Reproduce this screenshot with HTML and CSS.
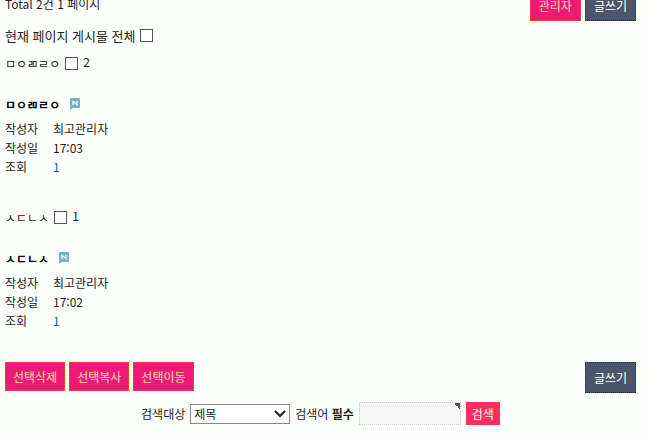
FILE: index.html
```
<!DOCTYPE html>
<html lang="ko">

<head>
    <meta charset="UTF-8">
    <meta name="viewport" content="width=device-width, initial-scale=1.0">
    <title>게시판</title>
    <link rel="stylesheet" href="styles.css">
</head>

<body>
    <div class="board">
        <div class="board-top">
            <div class="total">Total 2건 1 페이지</div>
            <div class="buttons">
                <a class="btn btn-admin" href="#">관리자</a>
                <a class="btn btn-write" href="#">글쓰기</a>
            </div>
        </div>

        <form>
            <div class="check-all">
                <label for="chkall">현재 페이지 게시물 전체</label>
                <input type="checkbox" id="chkall" class="check">
            </div>

            <ul class="list">
                <li class="item">
                    <div class="item-check">
                        <label for="chk_0">ㅁㅇㄻㄹㅇ</label>
                        <input type="checkbox" id="chk_0" class="check">
                        <span class="num">2</span>
                    </div>
                    <a class="item-title" href="#">ㅁㅇㄻㄹㅇ
                        <svg class="icon-new" viewBox="0 0 10 12" aria-hidden="true">
                            <path fill="#70b5bf" d="M1 0h8q1 0 1 1v8q0 1-1 1H3l-3 2V1q0-1 1-1z" />
                            <path fill="none" stroke="#fff" stroke-width="1.3" d="M3 7V3.3L7 6.7V3" />
                        </svg>
                    </a>
                    <dl class="info">
                        <dt>작성자</dt>
                        <dd>최고관리자</dd>
                        <dt>작성일</dt>
                        <dd>17:03</dd>
                        <dt>조회</dt>
                        <dd class="hit">1</dd>
                    </dl>
                </li>
                <li class="item">
                    <div class="item-check">
                        <label for="chk_1">ㅅㄷㄴㅅ</label>
                        <input type="checkbox" id="chk_1" class="check">
                        <span class="num">1</span>
                    </div>
                    <a class="item-title" href="#">ㅅㄷㄴㅅ
                        <svg class="icon-new" viewBox="0 0 10 12" aria-hidden="true">
                            <path fill="#70b5bf" d="M1 0h8q1 0 1 1v8q0 1-1 1H3l-3 2V1q0-1 1-1z" />
                            <path fill="none" stroke="#fff" stroke-width="1.3" d="M3 7V3.3L7 6.7V3" />
                        </svg>
                    </a>
                    <dl class="info">
                        <dt>작성자</dt>
                        <dd>최고관리자</dd>
                        <dt>작성일</dt>
                        <dd>17:02</dd>
                        <dt>조회</dt>
                        <dd class="hit">1</dd>
                    </dl>
                </li>
            </ul>

            <div class="board-bottom">
                <div class="buttons">
                    <button type="button" class="btn btn-admin">선택삭제</button>
                    <button type="button" class="btn btn-admin">선택복사</button>
                    <button type="button" class="btn btn-admin">선택이동</button>
                </div>
                <a class="btn btn-write" href="#">글쓰기</a>
            </div>
        </form>

        <form class="search">
            <label for="sfl">검색대상</label>
            <select id="sfl" class="search-target">
                <option>제목</option>
                <option>내용</option>
            </select>
            <label for="stx">검색어 <strong>필수</strong></label>
            <input type="text" id="stx" class="search-word">
            <button type="button" class="search-btn">검색</button>
        </form>
    </div>
</body>

</html>
```

FILE: styles.css
```
* {
    box-sizing: border-box;
}

body {
    margin: 0;
    background: #fcfffc;
    color: #222;
    font-family: "Noto Sans CJK KR", sans-serif;
    font-size: 12px;
    line-height: 19px;
    overflow: hidden;
}

/* the top of the list is scrolled out of view */
.board {
    margin-top: -10px;
    padding: 0 14px 0 5px;
}

a {
    color: #000;
    text-decoration: none;
}

.board-top,
.board-bottom {
    display: flex;
    justify-content: space-between;
    align-items: flex-start;
}

.total {
    padding-top: 4px;
}

.buttons {
    display: flex;
    gap: 4px;
}

.btn {
    padding: 4px 7px;
    border: 1px dotted #f0562a;
    background: #ed1978;
    color: #ffe0a0;
    font-family: inherit;
    font-size: 12px;
    line-height: 19px;
}

.btn-write {
    padding: 5px 8px;
    border-color: #222c38;
    background: #4a566c;
    color: #fff;
}

.board-top .btn-admin {
    padding: 5px 8px;
}

.check-all {
    display: flex;
    align-items: center;
    gap: 4px;
    margin-top: 5px;
    font-size: 13px;
}

.check {
    appearance: none;
    width: 13px;
    height: 13px;
    margin: 0;
    border: 1px solid #555;
    background: #fff;
}

.check:checked {
    background: #555;
}

.list {
    margin: 5px 0 0;
    padding: 0;
    list-style: none;
}

.item {
    padding-bottom: 27px;
}

.item-check {
    display: flex;
    align-items: center;
    gap: 5px;
    height: 26px;
}

.num {
    padding-bottom: 3px;
}

.item-title {
    display: flex;
    align-items: center;
    gap: 10px;
    height: 26px;
    margin: 15px 0 2px;
    font-weight: bold;
}

.icon-new {
    width: 10px;
    height: 12px;
}

.info {
    display: grid;
    grid-template-columns: 48px 1fr;
    margin: 0 0 1px;
}

.info dd {
    margin: 0;
}

.info .hit {
    color: #1f6299;
}

.board-bottom {
    margin-top: 4px;
}

.search {
    display: flex;
    justify-content: center;
    align-items: center;
    gap: 5px;
    margin-top: 9px;
}

.search-target {
    appearance: none;
    width: 100px;
    height: 20px;
    padding: 0 3px;
    border: 1px solid #888;
    border-radius: 0;
    background: #fff url("data:image/svg+xml,%3Csvg xmlns='http://www.w3.org/2000/svg' viewBox='0 0 12 8'%3E%3Cpath d='M1 1l5 5 5-5' fill='none' stroke='%23222' stroke-width='2'/%3E%3C/svg%3E") right 3px center / 12px 8px no-repeat;
    color: #222;
    font-family: inherit;
    font-size: 12px;
    line-height: 18px;
}

.search-word {
    width: 102px;
    height: 23px;
    padding: 0 4px;
    border: 1px dotted #ccc;
    background: linear-gradient(45deg, transparent 50%, #555 50%) right top / 6px 6px no-repeat #f5f6f5;
    font-family: inherit;
    font-size: 12px;
}

.search-btn {
    height: 23px;
    padding: 0 6px;
    border: 0;
    background: #ff3061;
    color: #fff;
    font-family: inherit;
    font-size: 12px;
}
```
